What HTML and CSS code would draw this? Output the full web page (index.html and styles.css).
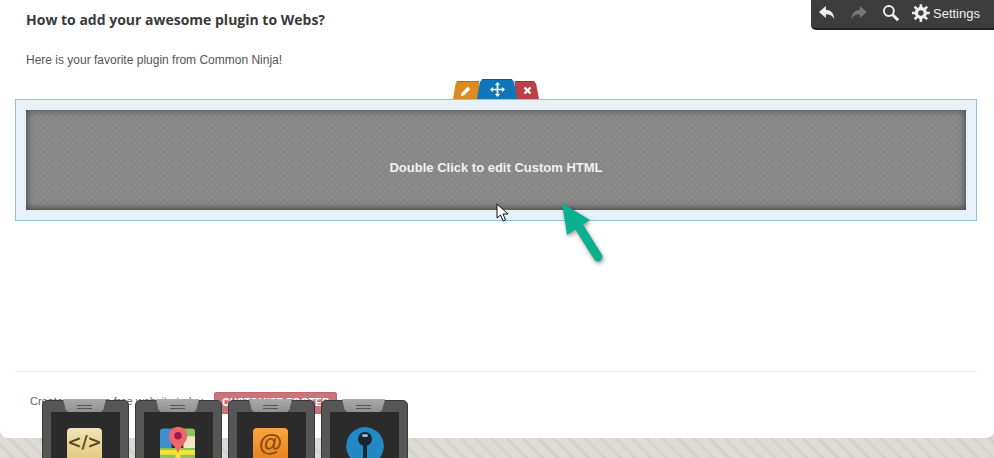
FILE: index.html
```html
<!DOCTYPE html>
<html lang="en">
<head>
  <meta charset="UTF-8" />
  <title>How to add your awesome plugin to Webs?</title>
  <link rel="stylesheet" href="styles.css">
</head>
<body>
  <div class="page">
    <h1>How to add your awesome plugin to Webs?</h1>
    <p class="intro">Here is your favorite plugin from Common Ninja!</p>

    <div class="selected">
      <div class="tabs">
        <div class="tab tab-edit">
          <svg width="12" height="12" viewBox="0 0 12 12"><path d="M1 11l.6-3L7.800 1.800l2.400 2.400L4 10.400z" fill="#fff"/></svg>
        </div>
        <div class="tab tab-move">
          <svg width="15" height="15" viewBox="0 0 14 14"><path d="M7 0l2.400 2.800H7.800v3.400h3.400V4.600L14 7l-2.800 2.400V7.800H7.800v3.400h1.600L7 14l-2.400-2.800h1.600V7.800H2.800v1.600L0 7l2.800-2.400v1.600h3.400V2.800H4.600z" fill="#fff"/></svg>
        </div>
        <div class="tab tab-delete">
          <svg width="9" height="9" viewBox="0 0 9 9"><path d="M1.500 1.500l6 6M7.500 1.500l-6 6" stroke="#fff" stroke-width="2.400"/></svg>
        </div>
      </div>
      <div class="html-block">Double Click to edit Custom HTML</div>
    </div>

    <div class="footer">
      <span>Create your own free website today.</span>
      <span class="footer-btn">CUSTOMIZE FOOTER</span>
    </div>
  </div>

  <div class="toolbar">
    <svg width="18" height="16" viewBox="0 0 18 16"><path d="M8 1L1 7l7 6V9.200c4 0 6.400 1.300 8.500 4.800C16 8.500 13 5 8 4.800z" fill="#eee"/></svg>
    <svg class="redo" width="18" height="16" viewBox="0 0 18 16"><path d="M10 1l7 6-7 6V9.200c-4 0-6.400 1.300-8.500 4.800C2 8.500 5 5 10 4.800z" fill="#777"/></svg>
    <svg class="search" width="18" height="18" viewBox="0 0 18 18"><circle cx="7" cy="7" r="5" fill="none" stroke="#eee" stroke-width="2"/><path d="M10.800 10.800l5.500 5.500" stroke="#eee" stroke-width="3"/></svg>
    <svg class="gear" width="18" height="18" viewBox="0 0 18 18"><circle cx="9" cy="9" r="4.500" fill="none" stroke="#eee" stroke-width="3.500"/><path d="M9 0v18M0 9h18M2.600 2.600l12.800 12.800M15.400 2.600L2.600 15.400" stroke="#eee" stroke-width="2.600" stroke-dasharray="3.400 11.200 3.400"/></svg>
    <span>Settings</span>
  </div>

  <svg class="cursor" width="14" height="20" viewBox="0 0 14 20"><path d="M1 1v14l3.500-3 2.500 6 2.500-1-2.500-6h5z" fill="#fff" stroke="#111"/></svg>

  <svg class="arrow" width="56" height="66" viewBox="0 0 56 66">
    <path d="M1 0l28 17-23 15z" fill="#0bb08f"/>
    <path d="M17 22l20 32" stroke="#0bb08f" stroke-width="9" stroke-linecap="round"/>
  </svg>

  <div class="dock">
    <div class="dock-item">
      <div class="clip"><i></i></div>
      <div class="dock-screen">
        <div class="app app-code">&lt;/&gt;</div>
      </div>
    </div>
    <div class="dock-item">
      <div class="clip"><i></i></div>
      <div class="dock-screen">
        <div class="app app-map">
          <svg width="36" height="36" viewBox="0 0 36 36"><path d="M0 0h12v20H0z" fill="#3f8fd0"/><path d="M12 0h24v12H12z" fill="#8cc25a"/><path d="M24 8h12v14H24z" fill="#f2e6c4"/><path d="M0 20h36v16H0z" fill="#8cc25a"/><path d="M0 22h36v5H0z" fill="#f5e23a"/><path d="M16 8h5v28h-5z" fill="#f5e23a"/></svg>
        </div>
        <svg class="pin" width="20" height="32" viewBox="0 0 24 34"><path d="M12 33C9 24 1 20 1 12a11 11 0 0 1 22 0c0 8-8 12-11 21z" fill="#f0646a"/><circle cx="12" cy="12" r="4.500" fill="#9c1c55"/></svg>
      </div>
    </div>
    <div class="dock-item">
      <div class="clip"><i></i></div>
      <div class="dock-screen">
        <div class="app app-mail">@</div>
      </div>
    </div>
    <div class="dock-item">
      <div class="clip"><i></i></div>
      <div class="dock-screen">
        <div class="app app-key">
          <svg width="38" height="38" viewBox="0 0 38 38"><circle cx="19" cy="19" r="19" fill="#2189c4"/><circle cx="19" cy="12" r="7" fill="#1a2630"/><path d="M17 16h4v22h-4z" fill="#1a2630"/><ellipse cx="19" cy="8.500" rx="3" ry="1.500" fill="#8cc0dc"/></svg>
        </div>
      </div>
    </div>
  </div>
</body>
</html>
```

FILE: styles.css
```css
html, body {
  margin: 0;
  height: 458px;
  overflow: hidden;
}

body {
  position: relative;
  font-family: "Liberation Sans", Arial, sans-serif;
  color: #555;
  background-color: #dedad6;
  background-image: repeating-linear-gradient(45deg, #dedad6 0, #dedad6 8px, #d4d0cc 8px, #d4d0cc 11px);
}

.page {
  height: 438px;
  box-sizing: border-box;
  padding: 11px 17px 0 15px;
  background: #fff;
  border-radius: 0 0 8px 8px;
}

h1 {
  margin: 0 0 0 11px;
  font-family: "Open Sans", sans-serif;
  font-size: 14px;
  line-height: 18px;
  font-weight: 700;
  color: #3a3a3a;
}

.intro {
  margin: 24px 0 0 11px;
  font-size: 12px;
  line-height: 14px;
  color: #555;
}

.selected {
  position: relative;
  margin-top: 32px;
  padding: 10px;
  background: #e6f2f8;
  border: 1px solid #8fc4de;
}

.html-block {
  height: 86px;
  padding-top: 14px;
  display: flex;
  align-items: center;
  justify-content: center;
  color: #f0f0f0;
  font-size: 13px;
  font-weight: 700;
  background-color: #8b8b8b;
  background-image:
    linear-gradient(45deg, transparent 42%, rgba(0,0,0,.05) 42%, rgba(0,0,0,.05) 58%, transparent 58%),
    linear-gradient(-45deg, transparent 42%, rgba(0,0,0,.05) 42%, rgba(0,0,0,.05) 58%, transparent 58%);
  background-size: 6px 6px;
  box-shadow: inset 0 0 9px rgba(0,0,0,.4), inset 0 -2px 5px rgba(0,0,0,.25);
}

.tabs {
  position: absolute;
  top: -21px;
  left: 437px;
  display: flex;
  align-items: flex-end;
}

.tab {
  display: flex;
  align-items: center;
  justify-content: center;
}

.tab-edit {
  width: 26px;
  height: 18px;
  background: #dc8a22;
  border-top: 1px solid #b96f16;
  box-sizing: border-box;
  clip-path: polygon(0 100%, 10% 15%, 16% 0, 100% 0, 100% 100%);
}

.tab-move {
  position: relative;
  z-index: 1;
  width: 40px;
  height: 20px;
  margin: 0 -2px;
  box-sizing: border-box;
  background: #0f76bb;
  border-top: 1px solid #0a5c94;
  clip-path: polygon(0 100%, 7% 15%, 14% 0, 86% 0, 93% 15%, 100% 100%);
}

.tab-delete {
  width: 24px;
  height: 18px;
  box-sizing: border-box;
  background: #bb4146;
  border-top: 1px solid #98343a;
  clip-path: polygon(0 0, 78% 0, 88% 15%, 100% 100%, 0 100%);
}

.footer {
  margin-top: 150px;
  padding: 20px 0 0 15px;
  height: 30px;
  border-top: 1px solid #eee;
  display: flex;
  align-items: flex-start;
  gap: 9px;
  font-size: 11px;
  line-height: 18px;
  color: #666;
}

.footer-btn {
  padding: 0 7px;
  background: #c8767c;
  border: 1px solid #c0666c;
  border-radius: 2px;
  color: #fff;
  font-size: 10px;
  line-height: 20px;
  font-weight: 700;
  letter-spacing: .25px;
  white-space: nowrap;
}

.toolbar {
  position: absolute;
  top: 0;
  right: 0;
  width: 183px;
  height: 30px;
  box-sizing: border-box;
  padding: 0 14px 2px 7px;
  display: flex;
  align-items: center;
  background: #3d3d3d;
  border-bottom: 2px solid #222;
  border-radius: 0 0 0 5px;
  color: #eee;
  font-size: 13px;
}

.toolbar .redo { margin-left: 14px; }
.toolbar .search { margin-left: 14px; }
.toolbar .gear { margin-left: 13px; margin-right: 3px; }

.cursor {
  position: absolute;
  left: 496px;
  top: 203px;
}

.arrow {
  position: absolute;
  left: 561px;
  top: 203px;
  filter: drop-shadow(1px 2px 2px rgba(0,0,0,.4));
}

.dock {
  position: absolute;
  left: 42px;
  top: 400px;
  display: flex;
  gap: 6px;
}

.dock-item {
  position: relative;
  width: 87px;
  height: 70px;
  box-sizing: border-box;
  padding: 11px 8px 0;
  background: #565656;
  border: 1px solid #3a3a3a;
  border-radius: 5px 5px 0 0;
}

.clip {
  position: absolute;
  top: -2px;
  left: 20px;
  width: 43px;
  height: 15px;
  display: flex;
  align-items: center;
  justify-content: center;
  background: linear-gradient(#aaa, #8c8c8c);
  clip-path: polygon(0 0, 100% 0, 94% 70%, 84% 100%, 16% 100%, 6% 70%);
}

.clip i {
  width: 15px;
  height: 2px;
  border-top: 1px solid #555;
  border-bottom: 1px solid #555;
}

.dock-screen {
  position: relative;
  height: 60px;
  background: #2b2b2b;
}

.app {
  position: absolute;
  top: 16px;
  left: 16px;
  width: 35px;
  height: 36px;
  display: flex;
  justify-content: center;
  border-radius: 4px;
  overflow: hidden;
}

.app-code {
  background: linear-gradient(#f0e3b8, #e0c878);
  color: #5c4a1a;
  font-family: "DejaVu Sans", sans-serif;
  font-size: 17px;
  font-weight: 700;
  line-height: 28px;
}

.app-mail {
  background: linear-gradient(#f7a440, #e67f18);
  color: #8f4a0a;
  font-size: 24px;
  font-weight: 700;
  line-height: 30px;
}

.app-key {
  top: 15px;
  left: 16px;
  width: 38px;
  height: 38px;
  border-radius: 50%;
}

.pin {
  position: absolute;
  top: 12px;
  left: 24px;
}
```
